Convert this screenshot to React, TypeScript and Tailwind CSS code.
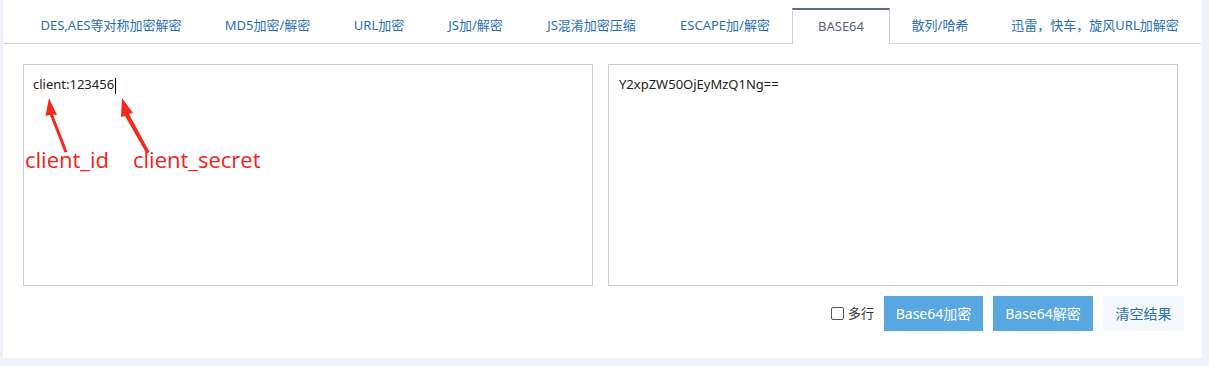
import React from "react";

const tabs: [string, string][] = [
  ["DES,AES等对称加密解密", "w-[184px]"],
  ["MD5加密/解密", "w-[129px]"],
  ["URL加密", "w-[94px]"],
  ["JS加/解密", "w-[99px]"],
  ["JS混淆加密压缩", "w-[133px]"],
  ["ESCAPE加/解密", "w-[134px]"],
  ["BASE64", "w-[98px]"],
  ["散列/哈希", "w-[100px]"],
  ["迅雷，快车，旋风URL加解密", "w-[210px]"],
];

const font = { fontFamily: '"Noto Sans", "Noto Sans CJK SC", sans-serif' };

export default function App() {
  return (
    <div className="w-[1209px] h-[366px] bg-[#eef3f9] pl-[3px] pr-[7px] overflow-hidden" style={font}>
      <div className="bg-white h-[358px] flex flex-col">
        <div className="flex pl-[15px] pt-[8px] border-b border-[#cfd3d9] h-[44px] mx-[1px]">
          {tabs.map(([t, w]) => {
            const active = t === "BASE64";
            return (
              <div
                key={t}
                className={
                  (active
                    ? "h-[36px] flex items-center justify-center text-[13px] text-[#5a6478] bg-white border-t-2 border-t-[#5d6b89] border-x border-x-[#cfd3d9] -mb-[1px]"
                    : "h-[35px] flex items-center justify-center text-[13px] text-[#2a6fb3]") +
                  " whitespace-nowrap shrink-0 " +
                  w
                }
              >
                {t}
              </div>
            );
          })}
        </div>
        <div className="flex gap-[15px] pl-[20px] pr-[24px] pt-[20px]">
          <div className="relative w-[570px] h-[222px] border border-[#cccccc] pl-[9px] pt-[10px] text-[13px] text-[#222]">
            <span>client:123456</span>
            <span className="inline-block w-[1px] h-[16px] bg-black align-middle ml-[1px]" />
            <svg className="absolute left-0 top-0" width="570" height="222" viewBox="0 0 570 222">
              <polygon points="25,33 33,50 29,49.5 43.5,87 40.5,87.5 26,50 21.5,51" fill="#f22a1c" />
              <polygon points="98,33 109,48 105,49 125.5,87 122.5,88.5 101,51 97,52" fill="#f22a1c" />
            </svg>
            <div
              className="absolute left-[1px] top-[83px] text-[22px] leading-none text-[#f5221a]"
              style={{ fontFamily: '"Open Sans", sans-serif' }}
            >
              client_id
            </div>
            <div
              className="absolute left-[109px] top-[83px] text-[22px] leading-none text-[#f5221a]"
              style={{ fontFamily: '"Open Sans", sans-serif' }}
            >
              client_secret
            </div>
          </div>
          <div className="w-[570px] h-[222px] border border-[#cccccc] pl-[10px] pt-[10px] text-[13px] text-[#222]">
            Y2xpZW50OjEyMzQ1Ng==
          </div>
        </div>
        <div className="flex justify-end items-center gap-[10px] pr-[18px] pt-[10px]">
          <label className="flex items-center gap-[4px] text-[13px] text-[#333]">
            <span className="w-[13px] h-[13px] border border-[#555] rounded-[2px] bg-white" />
            多行
          </label>
          <div className="h-[35px] w-[99px] flex items-center justify-center bg-[#58a7e1] text-white text-[14px]">Base64加密</div>
          <div className="h-[35px] w-[100px] flex items-center justify-center bg-[#58a7e1] text-white text-[14px]">Base64解密</div>
          <div className="h-[35px] w-[81px] flex items-center justify-center bg-[#f5f9fd] text-[#2a6fb3] text-[14px]">清空结果</div>
        </div>
      </div>
    </div>
  );
}
